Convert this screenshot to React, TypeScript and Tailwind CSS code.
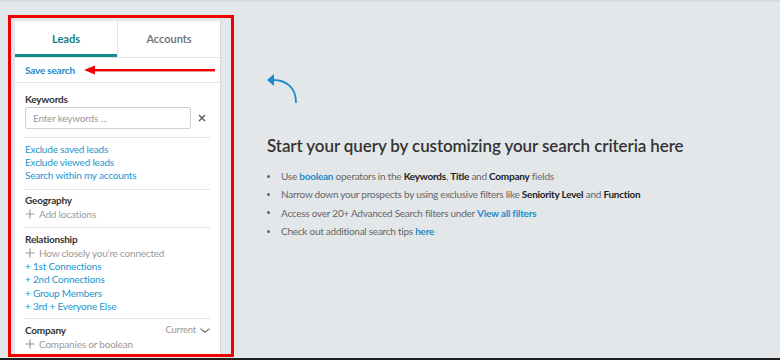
import React from "react";

const font = { fontFamily: "Lato, 'Open Sans', sans-serif" };

function Plus() {
  return (
    <svg width="10" height="10" viewBox="0 0 10 10" className="mr-[4px] shrink-0">
      <path d="M5 0.5v9M0.5 5h9" stroke="#9a9a9a" strokeWidth="1.2" />
    </svg>
  );
}

function Section({ children, last }: { children: React.ReactNode; last?: boolean }) {
  return (
    <div className={last ? "" : "border-b border-[#e3e3e3]"}>{children}</div>
  );
}

export default function App() {
  return (
    <div
      className="w-[780px] h-[360px] bg-[#e4e7ea] border-t-2 border-t-[#d7dadd] border-b-2 border-b-[#1f1f1f] flex overflow-hidden"
      style={font}
    >
      {/* left filter column, boxed in red */}
      <div className="ml-[8px] mt-[13px] w-[226px] h-[342px] border-[3px] border-[#f20000] pl-[4px] pt-[3px] overflow-hidden shrink-0">
        <div className="w-[206px] h-[400px] bg-white border-r border-[#d6d9dc] text-[10px] tracking-[-0.2px]">
          {/* tabs */}
          <div className="flex h-[37px] border-b border-[#e3e3e3] text-[11px] tracking-normal">
            <div className="w-[102px] flex items-center justify-center border-b-[3px] border-[#138a8f] pt-[3px] font-bold text-[#177c85]">
              Leads
            </div>
            <div className="flex-1 flex items-center justify-center border-l border-[#e3e3e3] text-[#6b6b6b] font-semibold">
              Accounts
            </div>
          </div>

          {/* save search */}
          <div className="h-[25px] flex items-center justify-between pl-[10px] pr-[5px] border-b border-[#e3e3e3]">
            <span className="font-bold text-[#1a8dc9]">Save search</span>
            <svg width="131" height="10" viewBox="0 0 131 10">
              <polygon points="0,5 11,0.5 11,9.5" fill="#ee0000" />
              <rect x="10" y="4" width="121" height="2.4" fill="#ee0000" />
            </svg>
          </div>

          <div className="px-[10px]">
            <Section>
              <div className="pt-[9px] pb-[8px]">
                <div className="leading-[14px] font-bold text-[#333]">Keywords</div>
                <div className="mt-[1px] flex items-center">
                  <div className="w-[166px] h-[22px] border border-[#cfcfcf] rounded-[2px] flex items-center pl-[7px] text-[#9a9a9a]">
                    Enter keywords ...
                  </div>
                  <svg width="8" height="8" viewBox="0 0 8 8" className="ml-[7px]">
                    <path d="M1 1l6 6M7 1l-6 6" stroke="#555" strokeWidth="1.3" />
                  </svg>
                </div>
              </div>
            </Section>

            <Section>
              <div className="pt-[5px] pb-[7px] leading-[13px] text-[#1b95d1]">
                <div>Exclude saved leads</div>
                <div>Exclude viewed leads</div>
                <div>Search within my accounts</div>
              </div>
            </Section>

            <Section>
              <div className="pt-[3px] pb-[6px] leading-[14px]">
                <div className="font-bold text-[#333]">Geography</div>
                <div className="flex items-center text-[#9a9a9a]">
                  <Plus />
                  Add locations
                </div>
              </div>
            </Section>

            <Section>
              <div className="pt-[4px] pb-[5px]">
                <div className="leading-[14px] font-bold text-[#333]">Relationship</div>
                <div className="leading-[14px] flex items-center text-[#9a9a9a]">
                  <Plus />
                  How closely you're connected
                </div>
                <div className="leading-[13.3px] text-[#1b95d1]">
                  <div>+ 1st Connections</div>
                  <div>+ 2nd Connections</div>
                  <div>+ Group Members</div>
                  <div>+ 3rd + Everyone Else</div>
                </div>
              </div>
            </Section>

            <Section last>
              <div className="pt-[4px] leading-[14px]">
                <div className="flex items-center justify-between">
                  <span className="font-bold text-[#333]">Company</span>
                  <span className="flex items-center text-[9.5px] text-[#9a9a9a]">
                    Current
                    <svg width="10" height="5" viewBox="0 0 10 5" className="ml-[4px]">
                      <path d="M0.5 0.6L5 4.2 9.5 0.6" stroke="#666" strokeWidth="1.1" fill="none" />
                    </svg>
                  </span>
                </div>
                <div className="flex items-center text-[#9a9a9a]">
                  <Plus />
                  Companies or boolean
                </div>
              </div>
            </Section>
          </div>
        </div>
      </div>

      {/* main empty state */}
      <div className="pl-[33px] pt-[70px] flex flex-col">
        <svg width="34" height="32" viewBox="0 0 34 32">
          <polygon points="0,8 7,2 7,14" fill="#1a8dc9" />
          <path d="M6 8 C20 8 29 16 29 31" stroke="#1a8dc9" strokeWidth="1.8" fill="none" />
        </svg>
        <h1 className="mt-[30px] text-[17px] leading-[24px] tracking-[-0.1px] font-semibold text-[#333]">
          Start your query by customizing your search criteria here
        </h1>
        <ul className="mt-[9px] text-[10px] tracking-[-0.25px] text-[#666] leading-[18.3px]">
          <li className="flex items-center">
            <span className="w-[3px] h-[3px] rounded-full bg-[#666] mr-[11px]" />
            <span>
              Use <b className="text-[#1a8dc9]">boolean</b> operators in the{" "}
              <b className="text-[#222]">Keywords</b>, <b className="text-[#222]">Title</b> and{" "}
              <b className="text-[#222]">Company</b> fields
            </span>
          </li>
          <li className="flex items-center">
            <span className="w-[3px] h-[3px] rounded-full bg-[#666] mr-[11px]" />
            <span>
              Narrow down your prospects by using exclusive filters like{" "}
              <b className="text-[#222]">Seniority Level</b> and <b className="text-[#222]">Function</b>
            </span>
          </li>
          <li className="flex items-center">
            <span className="w-[3px] h-[3px] rounded-full bg-[#666] mr-[11px]" />
            <span>
              Access over 20+ Advanced Search filters under{" "}
              <b className="text-[#1a8dc9]">View all filters</b>
            </span>
          </li>
          <li className="flex items-center">
            <span className="w-[3px] h-[3px] rounded-full bg-[#666] mr-[11px]" />
            <span>
              Check out additional search tips <b className="text-[#1a8dc9]">here</b>
            </span>
          </li>
        </ul>
      </div>
    </div>
  );
}
